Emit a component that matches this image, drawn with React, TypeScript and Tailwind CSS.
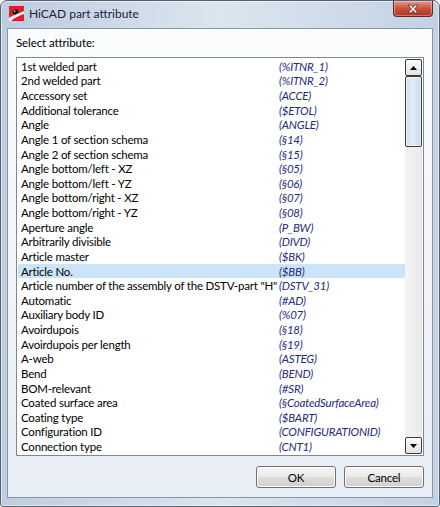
const rows: [string, string][] = [
  ["1st welded part", "(%ITNR_1)"],
  ["2nd welded part", "(%ITNR_2)"],
  ["Accessory set", "(ACCE)"],
  ["Additional tolerance", "($ETOL)"],
  ["Angle", "(ANGLE)"],
  ["Angle 1 of section schema", "(§14)"],
  ["Angle 2 of section schema", "(§15)"],
  ["Angle bottom/left - XZ", "(§05)"],
  ["Angle bottom/left - YZ", "(§06)"],
  ["Angle bottom/right - XZ", "(§07)"],
  ["Angle bottom/right - YZ", "(§08)"],
  ["Aperture angle", "(P_BW)"],
  ["Arbitrarily divisible", "(DIVD)"],
  ["Article master", "($BK)"],
  ["Article No.", "($BB)"],
  ['Article number of the assembly of the DSTV-part "H"', "(DSTV_31)"],
  ["Automatic", "(#AD)"],
  ["Auxiliary body ID", "(%07)"],
  ["Avoirdupois", "(§18)"],
  ["Avoirdupois per length", "(§19)"],
  ["A-web", "(ASTEG)"],
  ["Bend", "(BEND)"],
  ["BOM-relevant", "(#SR)"],
  ["Coated surface area", "(§CoatedSurfaceArea)"],
  ["Coating type", "($BART)"],
  ["Configuration ID", "(CONFIGURATIONID)"],
  ["Connection type", "(CNT1)"],
];

const SELECTED = 14;

function AppIcon() {
  return (
    <svg width="15" height="15" viewBox="0 0 15 15">
      <rect x="0" y="0" width="15" height="15" fill="#dd1f2b" />
      <path d="M0 12 C4 9 9 8 15 5 L15 8 C9 10 5 12 2 15 L0 15 Z" fill="#fff" />
      <ellipse cx="6.5" cy="6" rx="3" ry="2.4" fill="#111" transform="rotate(-25 6.5 6)" />
      <circle cx="5.6" cy="5.3" r="0.8" fill="#fff" />
    </svg>
  );
}

function CloseButton() {
  return (
    <div className="w-[40px] h-[16px] rounded-b-[4px] border border-t-0 border-[#5a2a22] bg-gradient-to-b from-[#e49a8c] via-[#c9523f] to-[#b0321f] flex items-center justify-center shadow-[inset_0_0_0_1px_rgba(255,255,255,0.35)]">
      <svg width="12" height="10" viewBox="0 0 12 10">
        <path
          d="M1 1 H4 L6 3.5 L8 1 H11 L7.6 5 L11 9 H8 L6 6.5 L4 9 H1 L4.4 5 Z"
          fill="#fff"
          stroke="#4a2a2a"
          strokeWidth="0.8"
          strokeLinejoin="round"
        />
      </svg>
    </div>
  );
}

function ScrollButton({ up }: { up?: boolean }) {
  return (
    <div className="h-[17px] w-[17px] shrink-0 rounded-[2px] border border-[#3a3a3a] bg-gradient-to-b from-[#fbfbfb] to-[#e3e3e3] flex items-center justify-center">
      <svg width="7" height="4" viewBox="0 0 7 4">
        {up ? <path d="M0 4 L3.5 0 L7 4 Z" fill="#000" /> : <path d="M0 0 L3.5 4 L7 0 Z" fill="#000" />}
      </svg>
    </div>
  );
}

function DialogButton({ label }: { label: string }) {
  return (
    <div className="w-[80px] h-[22px] rounded-[3px] border border-[#707070] bg-[linear-gradient(to_bottom,#f4f4f4_0%,#ebebeb_50%,#dddddd_51%,#cfcfcf_100%)] shadow-[inset_0_0_0_1px_#fcfcfc] flex items-center justify-center text-black">
      {label}
    </div>
  );
}

export default function App() {
  return (
    <div className="w-[440px] h-[507px] font-['Segoe_UI',Lato,sans-serif] text-[11.5px] tracking-[-0.2px] leading-[15px]">
      <div className="w-full h-full flex flex-col rounded-t-[7px] rounded-b-[3px] border border-[#55606d] bg-gradient-to-r from-[#bccde0] via-[#dbe5ef] to-[#c2d2e4] shadow-[inset_0_0_0_1px_rgba(255,255,255,0.55)]">
        <div className="h-[27px] flex items-start pl-[8px] pr-[6px]">
          <div className="mt-[5px]">
            <AppIcon />
          </div>
          <div className="ml-[5px] mt-[5px] text-[12px] tracking-normal text-[#1e1e3a]">HiCAD part attribute</div>
          <div className="flex-1" />
          <CloseButton />
        </div>
        <div className="flex-1 mx-[6px] mb-[8px] border border-[#8a97a6] bg-gradient-to-b from-[#fbfcfd] to-[#e7edf5] flex flex-col pl-[8px] pr-[8px]">
          <div className="pt-[6px] pb-[7px] text-black tracking-[-0.1px]">Select attribute:</div>
          <div className="w-[408px] h-[399px] border border-[#828790] bg-white flex p-[1px] overflow-hidden">
            <div className="w-[387px] overflow-hidden">
              {rows.map(([name, code], i) => (
                <div
                  key={name}
                  className={`h-[14.64px] flex items-center pl-[3px] whitespace-nowrap ${i === SELECTED ? "bg-[#cce4f7]" : ""}`}
                >
                  <span className="w-[258px] shrink-0 text-black">{name}</span>
                  <span className="italic text-[#1f2a7a]">{code}</span>
                </div>
              ))}
            </div>
            <div className="w-[17px] flex flex-col bg-gradient-to-r from-[#f4f4f4] to-[#e9e9e9]">
              <ScrollButton up />
              <div className="h-[71px] w-[17px] rounded-[2px] border border-[#3c3c3c] bg-gradient-to-r from-[#cfdff0] via-[#e2edf8] to-[#c6d9ee] shadow-[inset_0_0_0_1px_rgba(255,255,255,0.6)]" />
              <div className="flex-1" />
              <ScrollButton />
            </div>
          </div>
          <div className="flex justify-end gap-[8px] pt-[10px] w-[408px]">
            <DialogButton label="OK" />
            <DialogButton label="Cancel" />
          </div>
        </div>
      </div>
    </div>
  );
}
